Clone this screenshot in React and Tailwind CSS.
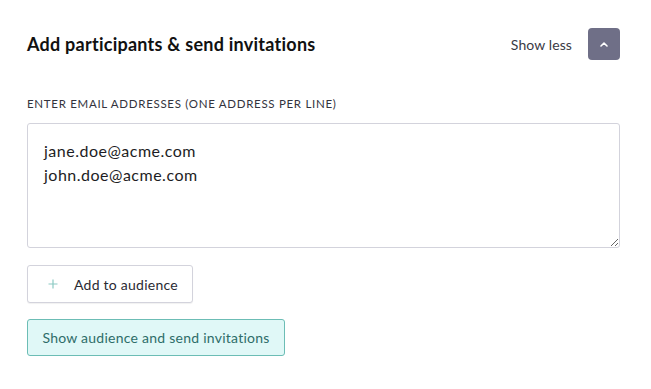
import React, { useEffect, useRef } from 'react';

const emails = 'jane.doe@acme.com\njohn.doe@acme.com';

const App = () => {
  const areaRef = useRef(null);

  useEffect(() => {
    const el = areaRef.current;
    if (el) {
      el.focus();
      el.setSelectionRange(emails.length, emails.length);
    }
  }, []);

  return (
    <div className="w-[651px] h-[389px] bg-white px-[27px] pt-7 text-[#1d1d24]" style={{ fontFamily: 'Lato, "Noto Sans", sans-serif' }}>
      <div className="flex items-center justify-between h-8 w-[593px]">
        <h2 className="text-[18px] font-bold tracking-[0.25px] text-[#111]">Add participants &amp; send invitations</h2>
        <div className="flex items-center gap-4">
          <span className="text-[14px] tracking-[0.1px] text-[#3a3a45]">Show less</span>
          <button className="w-8 h-8 rounded-[4px] bg-[#6f6f87] flex items-center justify-center">
            <svg width="8" height="5" viewBox="0 0 8 5" fill="none">
              <path d="M1 4L4 1.2L7 4" stroke="white" strokeWidth="1.6" strokeLinecap="round" strokeLinejoin="round" />
            </svg>
          </button>
        </div>
      </div>

      <div className="mt-9 text-[11.5px] leading-4 tracking-[0.7px] text-[#33333d]">
        ENTER EMAIL ADDRESSES (ONE ADDRESS PER LINE)
      </div>

      <textarea
        ref={areaRef}
        defaultValue={emails}
        className="mt-[11px] block w-[593px] h-[125px] border border-[#d3d3dc] rounded-[3px] pl-4 pt-[15px] text-[16px] leading-6 tracking-[0.5px] text-[#1d1d24] outline-none resize-y"
      />

      <button className="mt-[17px] flex items-center h-[38px] w-[166px] border border-[#d3d3dc] rounded-[3px] bg-white shadow-[0_1px_1px_rgba(0,0,0,0.06)]">
        <svg width="10" height="10" viewBox="0 0 10 10" className="ml-5">
          <path d="M5 0.5V9.5M0.5 5H9.5" stroke="#8ccac3" strokeWidth="1.2" />
        </svg>
        <span className="ml-4 text-[14px] tracking-[0.25px] text-[#2a2a33]">Add to audience</span>
      </button>

      <button className="mt-4 flex items-center justify-center h-[37px] w-[258px] border border-[#6cbdb5] rounded-[3px] bg-[#e0f8f7] text-[14px] tracking-[0.25px] text-[#2e6d69]">
        Show audience and send invitations
      </button>
    </div>
  );
};

export default App;
